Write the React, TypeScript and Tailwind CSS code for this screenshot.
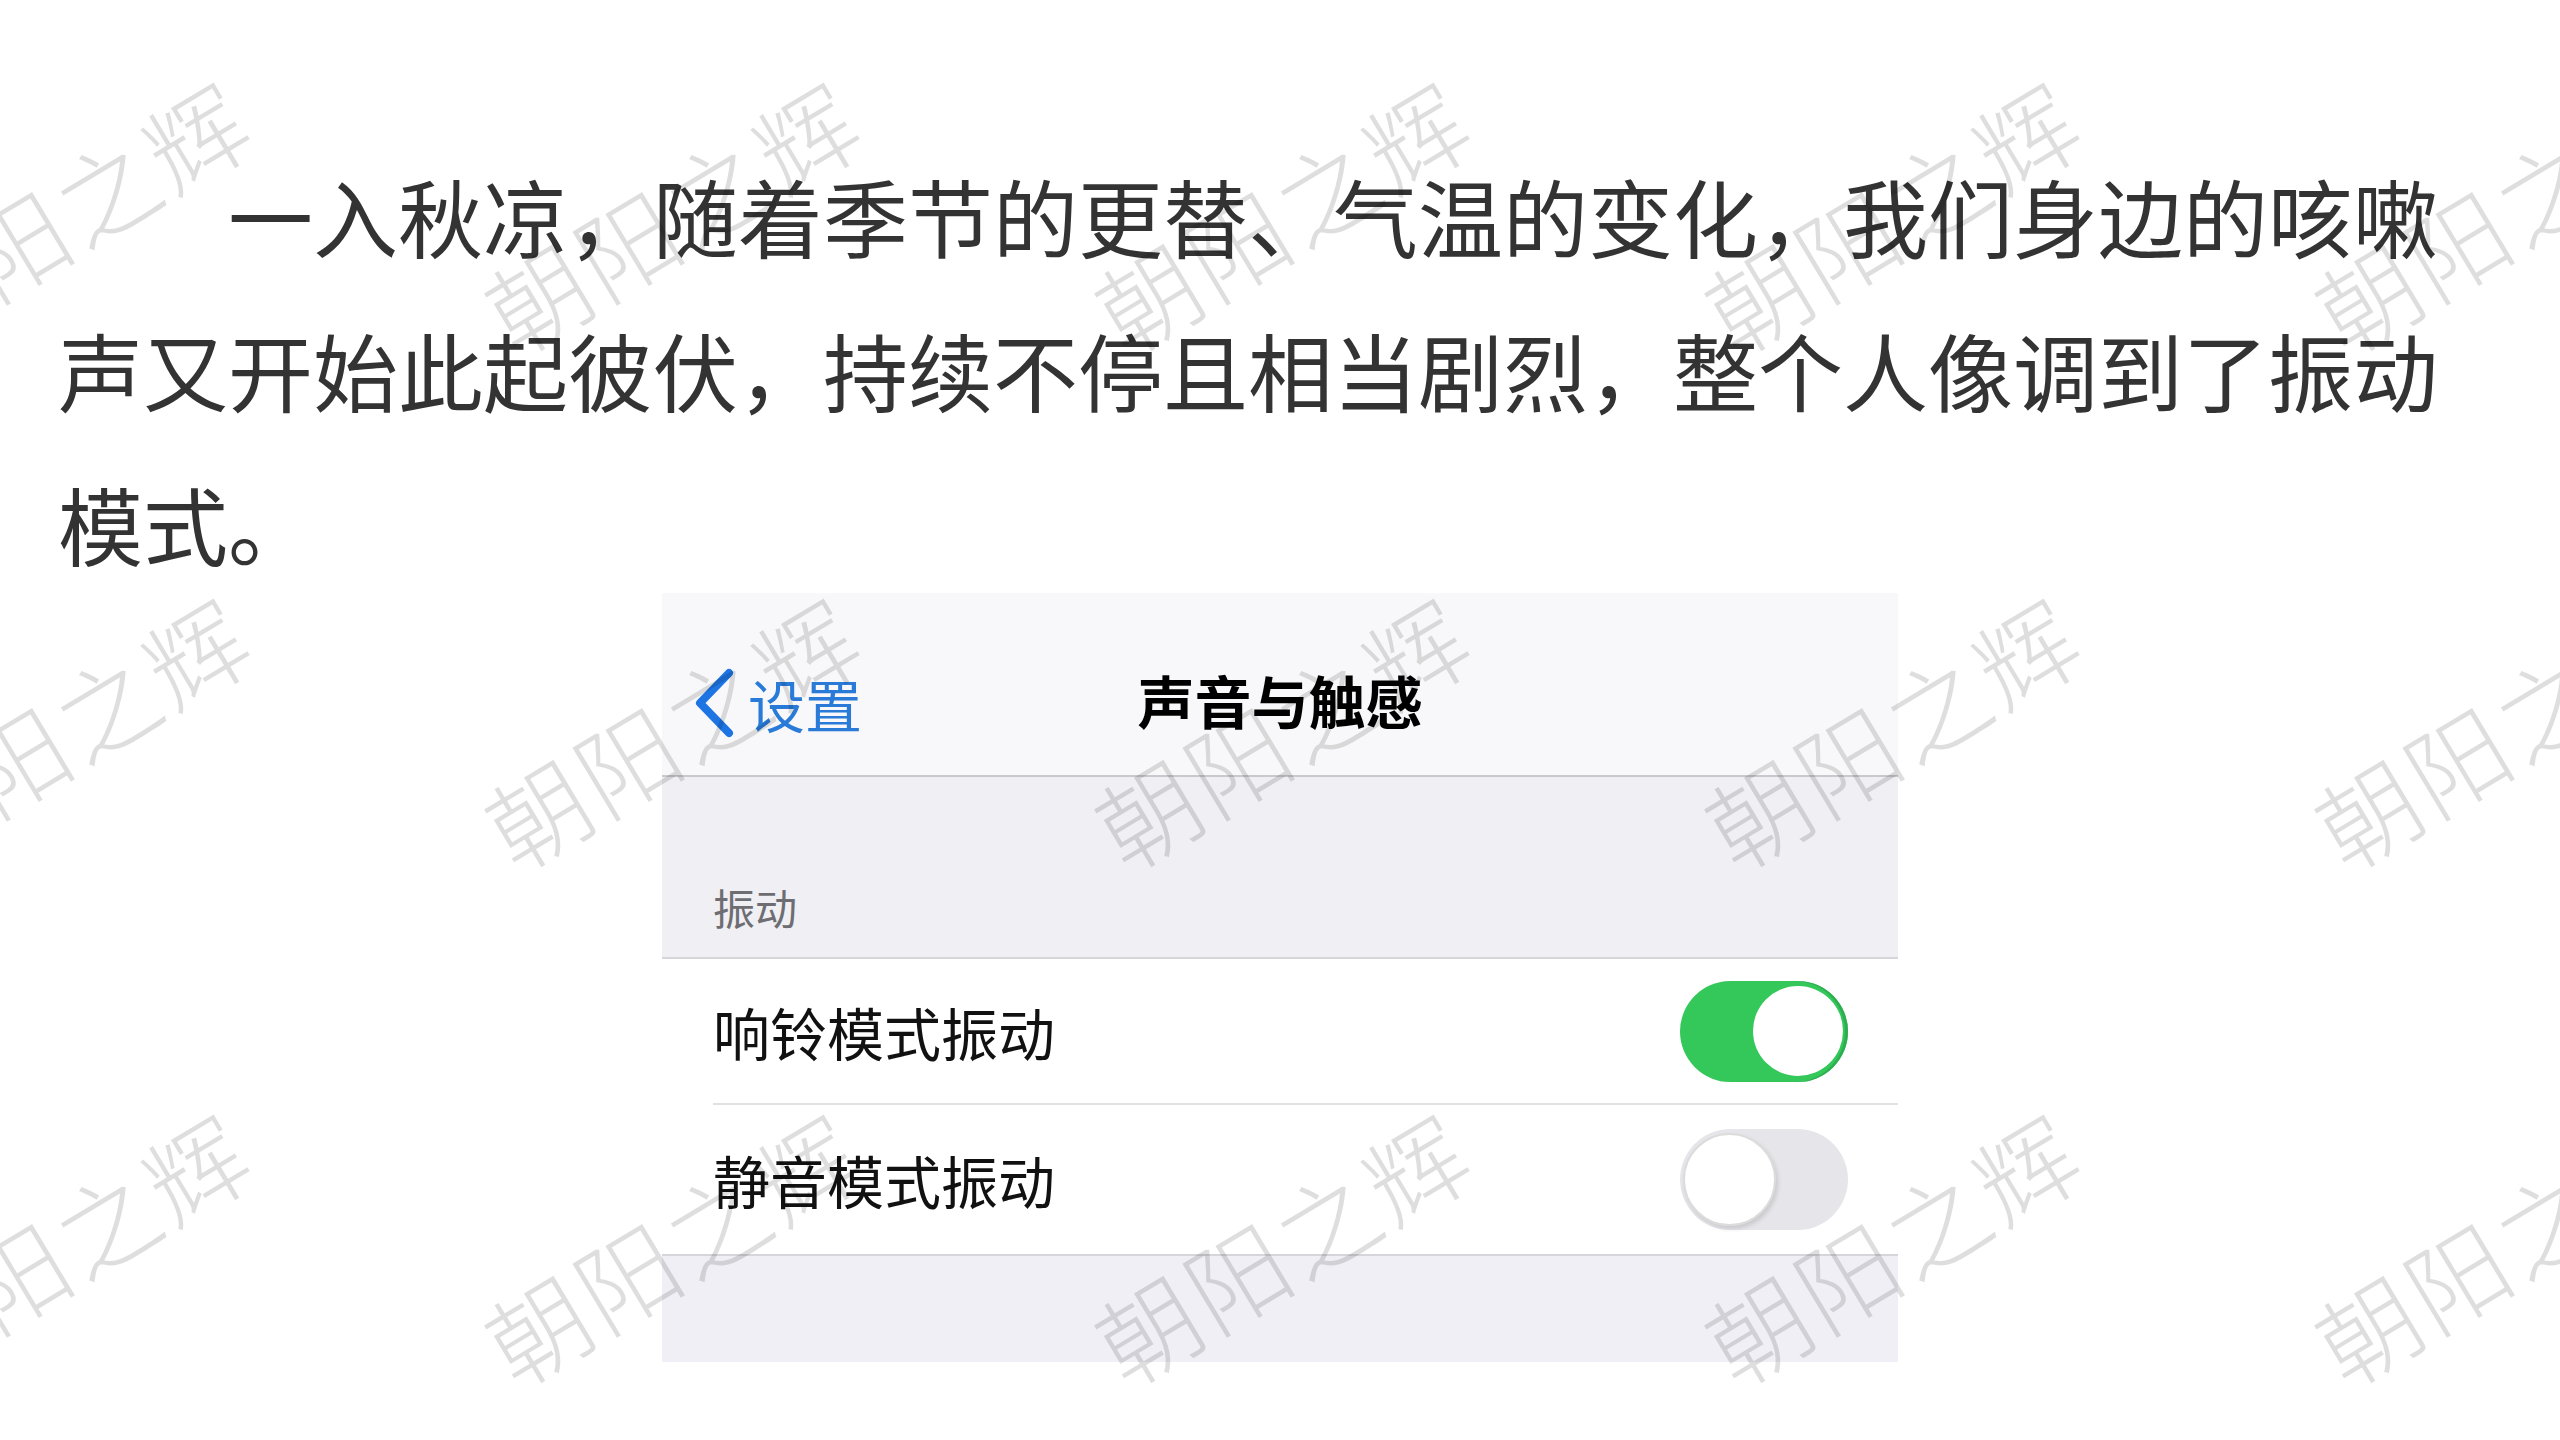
import type { ReactNode } from 'react';

const FONT = '"Noto Sans CJK SC", "Noto Sans", sans-serif';

// watermark centres on the page
const MARKS = [62, 672, 1282, 1892, 2502].flatMap((x) =>
  [214, 730, 1246].map((y) => ({ x, y }))
);

function Toggle({ on }: { on: boolean }) {
  if (on) {
    return (
      <div className="flex h-[101px] w-[168px] items-center justify-end rounded-full bg-[#34c759] pr-[5px] shadow-[inset_-3px_0_0_#2fae51]">
        <div className="h-[90px] w-[90px] rounded-full bg-white" />
      </div>
    );
  }
  return (
    <div className="flex h-[101px] w-[168px] items-center rounded-full bg-[#e6e6ea] pl-[3px]">
      <div className="h-[93px] w-[93px] rounded-full border-2 border-[#dcdcdc] bg-white shadow-[2px_3px_4px_rgba(0,0,0,0.12)]" />
    </div>
  );
}

function Row({ label, children, last }: { label: string; children: ReactNode; last?: boolean }) {
  return (
    <div className="bg-white pl-[51px]">
      <div
        className={
          'flex h-[146px] items-center justify-between pr-[50px] ' +
          (last ? 'h-[149px]' : 'border-b-2 border-[#e1e1e4]')
        }
      >
        <span className="text-[57px] leading-none text-[#111]">{label}</span>
        {children}
      </div>
    </div>
  );
}

function SettingsShot() {
  return (
    <div className="mx-auto -mt-[7px] w-[1236px] overflow-hidden">
      {/* nav bar */}
      <div className="relative flex h-[184px] items-center border-b-2 border-[#c9c9cd] bg-[#f8f8fa] pt-[38px] pl-[30px]">
        <svg width="44" height="72" viewBox="0 0 44 72" className="shrink-0">
          <polyline
            points="37,6 8,36 37,66"
            fill="none"
            stroke="#1d74e3"
            strokeWidth="8"
            strokeLinecap="round"
            strokeLinejoin="round"
          />
        </svg>
        <span className="ml-[12px] text-[57px] leading-none text-[#2a7bd8]">设置</span>
        <span className="absolute left-1/2 top-[58%] -translate-x-1/2 -translate-y-1/2 text-[57px] font-bold leading-none text-black">
          声音与触感
        </span>
      </div>

      {/* section header */}
      <div className="flex h-[182px] items-end border-b-2 border-[#d6d6da] bg-[#efeff4] pb-[22px] pl-[51px]">
        <span className="text-[42px] leading-[56px] text-[#6d6d72]">振动</span>
      </div>

      <Row label="响铃模式振动">
        <Toggle on />
      </Row>
      <Row label="静音模式振动" last>
        <Toggle on={false} />
      </Row>

      <div className="h-[108px] border-t-2 border-[#d6d6da] bg-[#f0eff5]" />
    </div>
  );
}

export default function App() {
  return (
    <div className="relative min-h-screen overflow-hidden bg-white" style={{ fontFamily: FONT }}>
      <div className="pt-[138px] pl-[58px]">
        <p className="w-[2384px] indent-[2em] text-[85px] leading-[154px] text-[#333]">
          一入秋凉，随着季节的更替、气温的变化，我们身边的咳嗽声又开始此起彼伏，持续不停且相当剧烈，整个人像调到了振动模式。
        </p>
      </div>

      <SettingsShot />

      {/* watermark */}
      {MARKS.map((m, i) => (
        <div
          key={i}
          className="pointer-events-none absolute -translate-x-1/2 -translate-y-1/2 -rotate-[31deg] whitespace-nowrap text-[100px] font-light leading-none tracking-[4px] text-black/[0.13]"
          style={{ left: m.x, top: m.y }}
        >
          朝阳之辉
        </div>
      ))}
    </div>
  );
}
